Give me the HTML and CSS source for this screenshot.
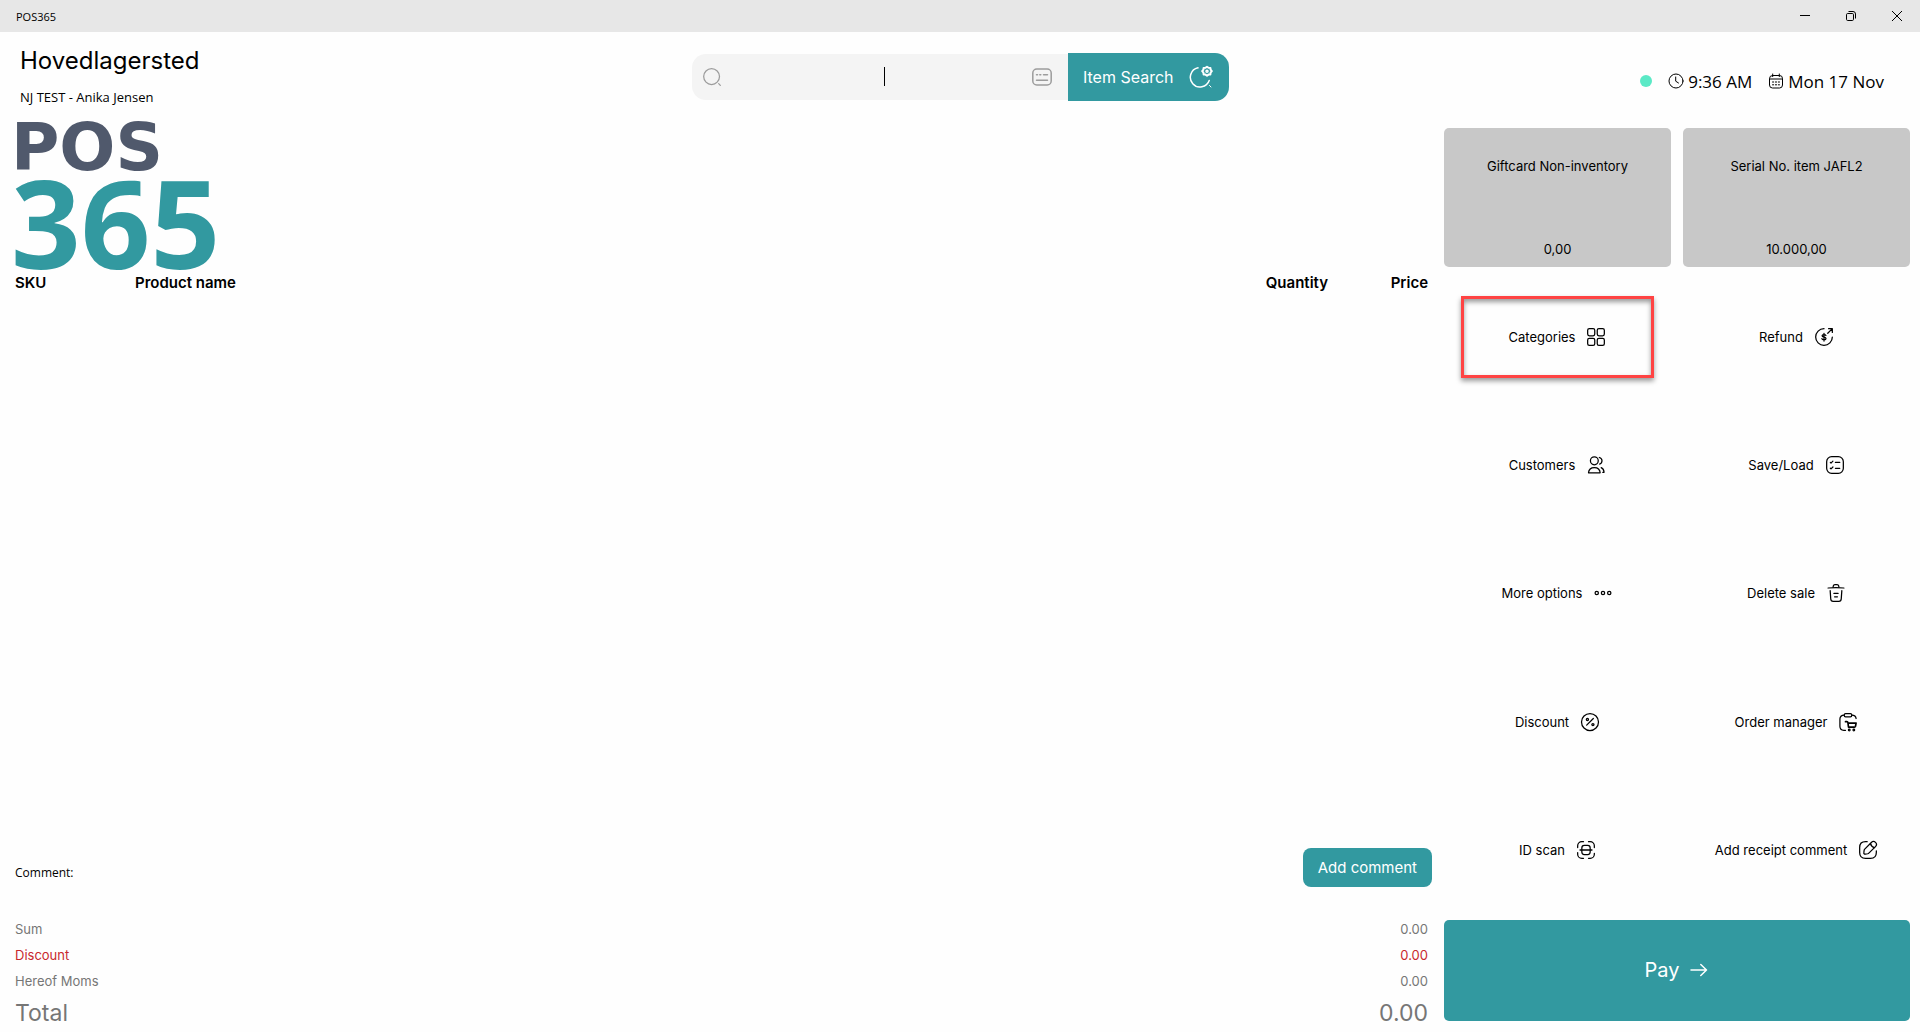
FILE: index.html
```
<!DOCTYPE html>
<html lang="en">
<head>
    <meta charset="UTF-8">
    <meta name="viewport" content="width=device-width, initial-scale=1.0">
    <title>POS365</title>
    <link rel="stylesheet" href="styles.css">
</head>
<body>
    <div class="titlebar">
        <span class="titlebar-name">POS365</span>
        <div class="window-controls">
            <button type="button" class="window-button" aria-label="Minimize">
                <svg width="10" height="10" viewBox="0 0 10 10"><path d="M0 4.5h10"/></svg>
            </button>
            <button type="button" class="window-button" aria-label="Restore">
                <svg width="10" height="10" viewBox="0 0 10 10"><rect x="0.5" y="2.5" width="7" height="7" rx="1.2"/><path d="M2.5 .5H7a2.5 2.5 0 0 1 2.5 2.5v4.5"/></svg>
            </button>
            <button type="button" class="window-button" aria-label="Close">
                <svg width="10" height="10" viewBox="0 0 10 10"><path d="M0 0l10 10M10 0L0 10"/></svg>
            </button>
        </div>
    </div>

    <header class="header">
        <div class="store">
            <h1 class="store-name">Hovedlagersted</h1>
            <p class="store-user">NJ TEST - Anika Jensen</p>
        </div>

        <form class="search">
            <div class="search-box">
                <svg class="search-icon" width="20" height="20" viewBox="0 0 24 24"><circle cx="11.5" cy="11.5" r="9.5"/><path d="M22 22l-2-2"/></svg>
                <div class="search-field">
                    <input type="text" class="search-input" aria-label="Search">
                    <span class="caret"></span>
                </div>
                <svg class="search-icon" width="22" height="20" viewBox="0 0 22 20"><rect x="1.8" y="2" width="18.4" height="16" rx="4"/><path d="M5.5 7.7h1M8.8 7.7h1M12.5 7.7h4M5.5 13.3h11"/></svg>
            </div>
            <button type="button" class="search-button">
                Item Search
                <svg width="24" height="24" viewBox="0 0 24 24"><path d="M9 2.8A9.7 9.7 0 1 0 20.2 15.5"/><path d="M20.5 20.5l1.5 1.5" stroke-width="1"/><path d="M18 1.7l1.5 1.1 1.9.1.2 1.8 1.2 1.5-1.2 1.5-.2 1.8-1.9.1L18 10.7l-1.5-1.1-1.9-.1-.2-1.8-1.2-1.5 1.2-1.5.2-1.8 1.9-.1z" stroke-width="2"/><circle cx="18" cy="6.2" r="1"/></svg>
            </button>
        </form>

        <div class="status">
            <span class="status-dot"></span>
            <span class="status-item">
                <svg width="16" height="16" viewBox="0 0 16 16"><circle cx="8" cy="8" r="7"/><path d="M7.7 4v4.2l2.8 1.8"/></svg>
                9:36 AM
            </span>
            <span class="status-item">
                <svg width="16" height="16" viewBox="0 0 16 16"><rect x="1.5" y="2.5" width="13" height="12.5" rx="3"/><path d="M4.7 1v2.6M11.3 1v2.6M1.5 6h13"/><path d="M4.5 9h1.2M7.4 9h1.2M10.3 9h1.2M4.5 11.8h1.2M7.4 11.8h1.2M10.3 11.8h1.2"/></svg>
                Mon 17 Nov
            </span>
        </div>
    </header>

    <main class="main">
        <section class="sale">
            <div class="logo">
                <span class="logo-pos">POS</span>
                <span class="logo-365">365</span>
            </div>

            <table class="lines">
                <thead>
                    <tr>
                        <th class="col-sku">SKU</th>
                        <th>Product name</th>
                        <th class="col-number">Quantity</th>
                        <th class="col-number">Price</th>
                    </tr>
                </thead>
                <tbody></tbody>
            </table>

            <div class="comment">
                <span class="comment-label">Comment:</span>
                <button type="button" class="comment-button">Add comment</button>
            </div>

            <dl class="totals">
                <div class="totals-row">
                    <dt>Sum</dt>
                    <dd>0.00</dd>
                </div>
                <div class="totals-row totals-discount">
                    <dt>Discount</dt>
                    <dd>0.00</dd>
                </div>
                <div class="totals-row">
                    <dt>Hereof Moms</dt>
                    <dd>0.00</dd>
                </div>
                <div class="totals-row totals-total">
                    <dt>Total</dt>
                    <dd>0.00</dd>
                </div>
            </dl>
        </section>

        <section class="actions">
            <button type="button" class="item-tile">
                <span>Giftcard Non-inventory</span>
                <span>0,00</span>
            </button>
            <button type="button" class="item-tile">
                <span>Serial No. item JAFL2</span>
                <span>10.000,00</span>
            </button>

            <button type="button" class="action highlighted">
                Categories
                <svg class="icon" viewBox="0 0 24 24"><rect x="2" y="2" width="8.5" height="8.5" rx="2"/><rect x="13.5" y="2" width="8.5" height="8.5" rx="2"/><rect x="2" y="13.5" width="8.5" height="8.5" rx="2"/><rect x="13.5" y="13.5" width="8.5" height="8.5" rx="2"/></svg>
            </button>
            <button type="button" class="action">
                Refund
                <svg class="icon" viewBox="0 0 24 24"><path d="M12 2a10 10 0 1 0 10 10"/><path d="M16.5 7.5L22 2M17.5 2H22v4.5"/><path d="M14.3 10.2c-.3-.8-1.100-1.200-2.300-1.200-1.400 0-2.300.5-2.300 1.500 0 2.200 4.700 1 4.700 3.200 0 1-1 1.600-2.400 1.600s-2.200-.5-2.500-1.300M12 7.500v9.300"/></svg>
            </button>

            <button type="button" class="action">
                Customers
                <svg class="icon" viewBox="0 0 24 24"><circle cx="10" cy="7" r="4.7"/><path d="M16 3c2.200.6 3.200 2.300 3.200 4s-1 3.300-2.800 3.900"/><path d="M3 21.300c.3-4 3-6.300 7-6.300s6.700 2.300 7 6.300z"/><path d="M18.200 15.200c2 .8 3.200 2.600 3.500 5.500h-1.600"/></svg>
            </button>
            <button type="button" class="action">
                Save/Load
                <svg class="icon" viewBox="0 0 24 24"><rect x="2" y="2" width="20" height="20" rx="6"/><path d="M12.500 8.900h5.200M12.500 15.900h5.200M6.400 8.900l.8.800 2.300-2.300M6.400 15.900l.8.800 2.300-2.300"/></svg>
            </button>

            <button type="button" class="action">
                More options
                <svg class="icon" viewBox="0 0 24 24"><circle cx="4.500" cy="12" r="2"/><circle cx="12" cy="12" r="2"/><circle cx="19.500" cy="12" r="2"/></svg>
            </button>
            <button type="button" class="action">
                Delete sale
                <svg class="icon" viewBox="0 0 24 24"><path d="M2.500 6C9 5.300 15 5.300 21.500 6"/><path d="M8.500 5l.3-1.600C9 2.400 9.400 2 10.700 2h2.600c1.300 0 1.700.5 1.900 1.400l.3 1.600"/><path d="M19 9.200l-.7 9.900c-.1 1.800-.2 2.900-2.900 2.900H8.600c-2.700 0-2.800-1.100-2.900-2.900L5 9.200"/><path d="M10.300 16.500h3.400M9.500 12.500h5"/></svg>
            </button>

            <button type="button" class="action">
                Discount
                <svg class="icon" viewBox="0 0 24 24"><circle cx="12" cy="12" r="10.200"/><path d="M8 15.800l8-8"/><circle cx="8.900" cy="9" r="1.300"/><circle cx="15.500" cy="15.100" r="1.300"/></svg>
            </button>
            <button type="button" class="action">
                Order manager
                <svg class="icon" viewBox="0 0 24 24"><rect x="7.500" y="1.800" width="9" height="4" rx="1.600"/><path d="M7.500 3.700C4.300 3.800 2.300 4.500 2.300 8.500v8.700c0 3.300 1.400 4.800 4.700 4.800H9"/><path d="M16.500 3.700c3.500.1 5 1.200 5.200 4.100"/><path d="M9 11.600h1.600c.8 0 1.200.4 1.300 1.200l.7 5.300h7.200c.7 0 1-.4 1.200-1l.7-3.800h-9.800" stroke-width="2"/><circle cx="13.500" cy="21.500" r="1"/><circle cx="19" cy="21.500" r="1"/></svg>
            </button>

            <button type="button" class="action">
                ID scan
                <svg class="icon" viewBox="0 0 24 24"><path d="M2 9V7c0-2.800 2.200-5 5-5h2M15 2h2c2.800 0 5 2.200 5 5v2M22 16v1c0 2.800-2.200 5-5 5h-2M9 22H7c-2.800 0-5-2.200-5-5v-2"/><rect x="7" y="6.500" width="10" height="11" rx="3"/><path d="M5 12h14" stroke-width="2"/></svg>
            </button>
            <button type="button" class="action">
                Add receipt comment
                <svg class="icon" viewBox="0 0 24 24"><path d="M11 2H9C4 2 2 4 2 9v6c0 5 2 7 7 7h6c5 0 7-2 7-7v-2"/><path d="M16 3l-7.900 7.900c-.3.300-.6.900-.7 1.300L7 15.200c-.2 1.100.6 1.900 1.700 1.700l3-.4c.4-.1 1-.4 1.300-.7L21 7.900c1.400-1.400 2-3 0-5s-3.600-1.300-5 .1z"/><path d="M14.900 4.200c.7 2.400 2.500 4.300 4.900 4.900"/></svg>
            </button>

            <button type="button" class="pay-button">
                Pay
                <svg width="20" height="20" viewBox="0 0 20 20"><path d="M2 10h15.500M11.800 4.500l5.700 5.500-5.700 5.500"/></svg>
            </button>
        </section>
    </main>
</body>
</html>
```

FILE: styles.css
```
* {
    box-sizing: border-box;
}

body {
    margin: 0;
    min-height: 100vh;
    display: flex;
    flex-direction: column;
    background-color: #fefefe;
    color: #000;
    font-family: 'Inter', sans-serif;
    font-size: 13px;
}

button {
    border: none;
    padding: 0;
    background: none;
    color: inherit;
    font: inherit;
    cursor: pointer;
}

svg {
    flex: none;
    fill: none;
    stroke: currentColor;
    stroke-width: 1.5;
    stroke-linecap: round;
    stroke-linejoin: round;
}

/* Title bar */
.titlebar {
    display: flex;
    justify-content: space-between;
    align-items: center;
    height: 32px;
    padding-left: 16px;
    background-color: #e7e7e7;
    font-family: 'Open Sans', sans-serif;
    font-size: 11px;
}

.window-controls {
    display: flex;
    height: 100%;
}

.window-button {
    display: flex;
    align-items: center;
    justify-content: center;
    width: 46px;
}

.window-button svg {
    stroke-width: 1;
    stroke-linecap: butt;
}

/* Header */
.header {
    display: grid;
    grid-template-columns: 1fr auto 1fr;
    align-items: center;
    height: 90px;
    padding: 0 20px;
}

.store {
    padding-bottom: 2px;
}

.store-name {
    margin: 0 0 10px;
    font-size: 24px;
    font-weight: 400;
    line-height: 32px;
}

.store-user {
    margin: 0;
    font-family: 'Open Sans', sans-serif;
    font-size: 13px;
    line-height: 20px;
}

.search {
    display: flex;
    align-items: center;
    width: 537px;
}

.search-box {
    display: flex;
    flex: 1;
    align-items: center;
    gap: 6px;
    height: 46px;
    padding: 0 15px 0 10px;
    border-radius: 14px 0 0 14px;
    background-color: #f4f4f4;
}

.search-icon {
    color: #9c9c9c;
}

.search-field {
    position: relative;
    flex: 1;
    margin-left: 16px;
}

.search-input {
    width: 100%;
    border: none;
    outline: none;
    background: none;
    font: inherit;
    font-size: 16px;
    text-align: center;
}

.caret {
    position: absolute;
    top: 1px;
    left: 50%;
    width: 1px;
    height: 19px;
    background-color: #000;
}

.search-button {
    display: flex;
    align-items: center;
    gap: 15px;
    height: 48px;
    padding: 0 16px 0 15px;
    border-radius: 0 14px 14px 0;
    background-color: #3299a0;
    color: #fff;
    font-size: 16px;
}

.status {
    display: flex;
    align-items: center;
    justify-content: flex-end;
    gap: 16px;
    padding: 8px 16px 0 0;
    font-family: 'Open Sans', sans-serif;
    font-size: 17px;
}

.status-dot {
    width: 12px;
    height: 12px;
    border-radius: 50%;
    background-color: #5be9c6;
}

.status-item {
    display: flex;
    align-items: center;
    gap: 4px;
}

.status-item svg {
    stroke-width: 1;
}

/* Main area */
.main {
    display: grid;
    flex: 1;
    grid-template-columns: 1fr 466px;
    gap: 12px;
    padding: 0 10px 0 15px;
}

.sale {
    display: flex;
    flex-direction: column;
}

.logo {
    display: flex;
    flex-direction: column;
    height: 151px;
    margin-left: -4px;
    font-weight: 700;
}

.logo-pos {
    color: #50596c;
    font-family: 'DejaVu Sans', sans-serif;
    font-size: 66px;
    line-height: 52px;
}

.logo-365 {
    color: #3299a0;
    font-family: 'Open Sans', sans-serif;
    font-size: 122px;
    line-height: 96px;
}

.lines {
    width: 1413px;
    max-width: 100%;
    border-collapse: collapse;
    font-size: 15px;
    line-height: 20px;
}

.lines th {
    padding: 0;
    font-weight: 600;
    text-align: left;
}

.lines .col-sku {
    width: 120px;
}

.lines .col-number {
    width: 100px;
    text-align: right;
}

.comment {
    display: flex;
    justify-content: space-between;
    align-items: center;
    margin: auto 0 29px;
}

.comment-label {
    padding-top: 10px;
    font-family: 'Open Sans', sans-serif;
    font-size: 12px;
}

.comment-button {
    height: 39px;
    padding: 0 15px;
    border-radius: 8px;
    background-color: #3299a0;
    color: #fff;
    font-size: 15px;
}

.totals {
    margin: 0;
    padding-right: 4px;
    color: #767676;
}

.totals-row {
    display: flex;
    justify-content: space-between;
    line-height: 26px;
}

.totals-row dd {
    margin: 0;
}

.totals-discount {
    color: #c8282d;
}

.totals-total {
    font-size: 23px;
    line-height: 38px;
}

/* Right side buttons */
.actions {
    display: grid;
    grid-template-columns: 1fr 1fr;
    grid-template-rows: 139px repeat(5, 1fr) 101px;
    gap: 12px;
    padding: 6px 0 11px;
}

.item-tile {
    display: flex;
    flex-direction: column;
    justify-content: space-between;
    align-items: center;
    padding: 30px 10px 10px;
    border-radius: 5px;
    background-color: #c8c8c8;
}

.action {
    display: flex;
    align-items: center;
    justify-content: center;
    gap: 11px;
}

.highlighted {
    position: relative;
}

.highlighted::after {
    content: '';
    position: absolute;
    inset: 17px;
    border: 3px solid #ff4343;
    box-shadow: 0 3px 5px rgba(0, 0, 0, 0.4), inset 0 3px 5px rgba(0, 0, 0, 0.4);
}

.icon {
    width: 20px;
    height: 20px;
}

.pay-button {
    display: flex;
    grid-column: 1 / -1;
    align-items: center;
    justify-content: center;
    gap: 10px;
    border-radius: 5px;
    background-color: #3299a0;
    color: #fff;
    font-size: 20px;
}
```
